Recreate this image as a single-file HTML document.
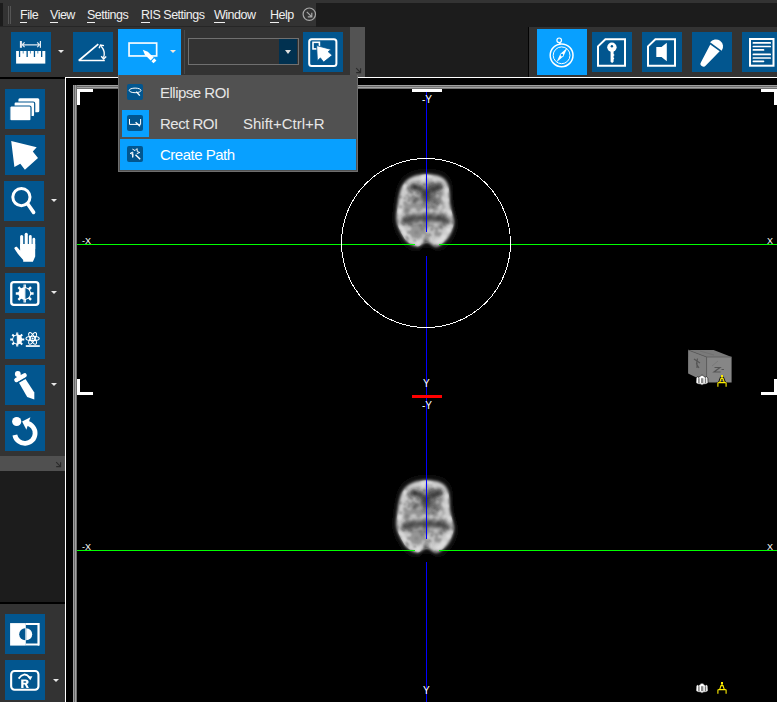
<!DOCTYPE html>
<html><head><meta charset="utf-8">
<style>
html,body{margin:0;padding:0;width:777px;height:702px;overflow:hidden;background:#1c1c1c;font-family:"Liberation Sans",sans-serif;}
.a{position:absolute;}
.btn{position:absolute;width:40px;height:40px;background:#02568f;}
.btn svg{position:absolute;left:0;top:0;width:40px;height:40px;}
.dd{position:absolute;width:0;height:0;border-left:3px solid transparent;border-right:3px solid transparent;border-top:3px solid #e8e8e8;}
.mi{position:absolute;top:8px;font-size:12.5px;letter-spacing:-0.5px;color:#f0f0f0;white-space:nowrap;line-height:14px;}
.mi u{text-decoration:none;border-bottom:1px solid #f0f0f0;}
.pm{position:absolute;font-size:15px;letter-spacing:-0.5px;color:#e6e6e6;white-space:nowrap;line-height:16px;}
.lbl{position:absolute;font-size:10px;color:#fff;line-height:10px;white-space:nowrap;}
</style></head><body>

<!-- title strip -->
<div class="a" style="left:0;top:0;width:777px;height:3px;background:#333;"></div>
<!-- menu bar -->
<div class="a" style="left:0;top:3px;width:316px;height:23px;background:#333;"></div>
<div class="a" style="left:0;top:3px;width:3px;height:23px;background:#1c1c1c;"></div>
<div class="a" style="left:0;top:26px;width:316px;height:1px;background:#262626;"></div>
<div class="a" style="left:8px;top:6px;width:1px;height:18px;background:#555;"></div>
<div class="a" style="left:10px;top:6px;width:1px;height:18px;background:#555;"></div>
<div class="mi" style="left:20px;"><u>F</u>ile</div>
<div class="mi" style="left:50px;"><u>V</u>iew</div>
<div class="mi" style="left:87px;"><u>S</u>ettings</div>
<div class="mi" style="left:141px;"><u>R</u>IS Settings</div>
<div class="mi" style="left:214px;"><u>W</u>indow</div>
<div class="mi" style="left:270px;"><u>H</u>elp</div>
<svg class="a" style="left:302px;top:7px;" width="15" height="15" viewBox="0 0 15 15"><circle cx="7.3" cy="7.2" r="6.2" fill="none" stroke="#a8a8a8" stroke-width="1.2"/><path d="M4.8 4.8 L9.8 9.8 M9.8 5.8 V9.8 H5.8" fill="none" stroke="#a8a8a8" stroke-width="1.2"/></svg>

<!-- toolbar left -->
<div class="a" style="left:0;top:27px;width:350px;height:50px;background:#333;"></div>
<div class="a" style="left:350px;top:27px;width:15px;height:50px;background:#535353;"></div>
<svg class="a" style="left:355px;top:67px;" width="8" height="8" viewBox="0 0 8 8"><path d="M1.2 1.2 L5.6 5.6 M5.6 1.2 V5.6 H1.2" fill="none" stroke="#2a2a2a" stroke-width="1.1"/></svg>

<!-- ruler -->
<div class="btn" style="left:11px;top:32px;"><svg width="40" height="40" viewBox="0 0 40 40">
<rect x="5.1" y="19" width="29.2" height="12.6" fill="#fff"/>
<g fill="#02568f"><rect x="7.9" y="19" width="1.3" height="6"/><rect x="15.5" y="19" width="1.3" height="6"/><rect x="22.8" y="19" width="1.3" height="6"/><rect x="30" y="19" width="1.3" height="6"/></g>
<g fill="#4f8fba"><rect x="11.7" y="19" width="1" height="2.5"/><rect x="18.9" y="19" width="1" height="2.5"/><rect x="26.3" y="19" width="1" height="2.5"/></g>
<rect x="8.9" y="9" width="2" height="6.8" fill="#e8eef4"/><rect x="28.8" y="9" width="1.2" height="6.8" fill="#e8eef4"/>
<path d="M11.2 12.8 H28.6 M13.6 10.4 L11.2 12.8 L13.6 15.2 M26.2 10.4 L28.6 12.8 L26.2 15.2" fill="none" stroke="#dfe8f0" stroke-width="1.2"/>
</svg></div>
<div class="dd" style="left:58px;top:50px;"></div>
<!-- angle -->
<div class="btn" style="left:73px;top:32px;"><svg width="40" height="40" viewBox="0 0 40 40">
<path d="M31.8 28.5 H5.8 L25.3 12.2" fill="none" stroke="#fff" stroke-width="1.7" stroke-linejoin="bevel"/>
<path d="M28.2 14.3 Q32.8 19.5 30.5 25.8" fill="none" stroke="#fff" stroke-width="1.3"/>
<path d="M26.1 16.2 L27.5 13 L31 13.6 M28.2 24.2 L30.6 27 L33.2 24.4" fill="none" stroke="#fff" stroke-width="1.4"/>
</svg></div>
<!-- ROI active -->
<div class="a" style="left:118px;top:29px;width:63px;height:46px;background:#08a0ff;"><svg width="63" height="46" viewBox="0 0 63 46">
<rect x="11.05" y="14.05" width="27.6" height="12.9" fill="none" stroke="#f4fbff" stroke-width="1.7"/>
<g transform="translate(24.8,20.7) rotate(45)">
<path d="M0 0 L5 -2.1 L13.2 -2.1 L13.2 2.1 L5 2.1 Z" fill="#fff"/>
<rect x="14.2" y="-2" width="3" height="4" fill="#fff"/>
</g>
</svg></div>
<div class="dd" style="left:170px;top:50px;border-top-color:#f4e8dc;"></div>
<div class="a" style="left:184px;top:30px;width:1px;height:44px;background:#484848;"></div>
<!-- combo -->
<div class="a" style="left:188px;top:38px;width:109px;height:25px;border:1px solid #707070;background:#333;"></div>
<div class="a" style="left:279px;top:39px;width:18px;height:25px;background:#013150;"></div>
<div class="dd" style="left:285px;top:50px;border-left-width:3.5px;border-right-width:3.5px;border-top-width:4px;border-top-color:#e0e0e0;"></div>
<!-- select -->
<div class="btn" style="left:303px;top:32px;"><svg width="40" height="40" viewBox="0 0 40 40">
<rect x="6.2" y="7.2" width="27.2" height="26.8" rx="2.5" fill="none" stroke="#fff" stroke-width="2"/>
<rect x="10" y="10.3" width="6.4" height="6.6" fill="none" stroke="#fff" stroke-width="1.6"/>
<path d="M13.6 13.6 L28.2 17.4 L25.2 19.7 L29.2 23.3 L20.6 30.1 L17.4 25.9 L14.4 28.8 Z" fill="#fff" stroke="#02568f" stroke-width="0.8"/>
</svg></div>

<!-- right toolbar -->
<div class="a" style="left:528px;top:27px;width:1px;height:50px;background:#030303;"></div>
<div class="a" style="left:529px;top:27px;width:248px;height:50px;background:#333;"></div>
<div class="a" style="left:537px;top:29px;width:50px;height:46px;background:#08a0ff;"><svg width="50" height="46" viewBox="0 0 50 46">
<circle cx="24.6" cy="26.3" r="11.4" fill="none" stroke="#fff" stroke-width="1.5"/>
<circle cx="24.6" cy="26.3" r="8.4" fill="none" stroke="#fff" stroke-width="1"/>
<circle cx="22.2" cy="11.3" r="2.3" fill="none" stroke="#fff" stroke-width="1.2"/>
<path d="M22.6 13.6 L23.2 15" stroke="#fff" stroke-width="1.6"/>
<path d="M19.5 33.2 L23.4 24.8 L30.4 18.8 L26.5 27.2 Z" fill="#fff"/>
<circle cx="24.9" cy="26.1" r="1.3" fill="#08a0ff"/>
</svg></div>
<div class="btn" style="left:592px;top:32px;"><svg width="40" height="40" viewBox="0 0 40 40">
<path d="M6 14.4 L13.4 7.2 H33 V33.7 H6 Z" fill="none" stroke="#fff" stroke-width="2"/>
<circle cx="19.9" cy="15.2" r="4.7" fill="#fff"/>
<circle cx="19.9" cy="14.2" r="1.2" fill="#02568f"/>
<path d="M18.6 18 H21.6 V22 L22.6 23 L21.6 24 V25.5 L22.3 26.5 L21.6 27.5 V29.8 L20.1 31 L18.6 29.8 Z" fill="#fff"/>
</svg></div>
<div class="btn" style="left:642px;top:32px;"><svg width="40" height="40" viewBox="0 0 40 40">
<path d="M6 14.4 L13.4 7.2 H33 V33.7 H6 Z" fill="none" stroke="#fff" stroke-width="2"/>
<path d="M14.3 15 H19.5 L24.8 10.8 V29.2 L19.5 24.9 H14.3 Z" fill="#fff"/>
</svg></div>
<div class="btn" style="left:692px;top:32px;"><svg width="40" height="40" viewBox="0 0 40 40">
<g transform="translate(25.6 12.2) rotate(36) scale(1.12)"><path d="M-6.4 2.6 A6.4 6.4 0 1 1 6.4 2.6 Z" fill="#fff"/><path d="M-5.2 4 H5.2 L2.6 21.5 A2.6 2.6 0 0 1 -2.6 21.5 Z" fill="#fff"/></g>
</svg></div>
<div class="btn" style="left:742px;top:32px;"><svg width="40" height="40" viewBox="0 0 40 40">
<rect x="8" y="7" width="23.5" height="26.7" fill="none" stroke="#fff" stroke-width="2"/>
<g stroke="#fff" stroke-width="1.7" stroke-linecap="round"><path d="M11.4 10.9 H28.2 M11.4 14.5 H28.2 M11.4 17.9 H21.5 M11.4 22.4 H28.2 M11.4 26 H28.2 M11.4 29.3 H21.5"/></g>
</svg></div>

<!-- left sidebar -->
<div class="a" style="left:0;top:77px;width:65px;height:2px;background:#000;"></div>
<div class="a" style="left:0;top:79px;width:65px;height:377px;background:#333;"></div>
<div class="a" style="left:0;top:456px;width:65px;height:15px;background:#505050;"></div>
<svg class="a" style="left:55px;top:461px;" width="8" height="8" viewBox="0 0 8 8"><path d="M1.2 1.2 L5.6 5.6 M5.6 1.2 V5.6 H1.2" fill="none" stroke="#2a2a2a" stroke-width="1.1"/></svg>
<div class="a" style="left:0;top:602px;width:65px;height:2px;background:#000;"></div>
<div class="a" style="left:0;top:604px;width:65px;height:98px;background:#333;"></div>

<div class="btn" style="left:5px;top:89px;"><svg width="40" height="40" viewBox="0 0 40 40">
<rect x="13.4" y="9.2" width="20.9" height="14.1" rx="1.5" fill="#fff"/>
<rect x="9" y="13" width="20.7" height="14.5" rx="1.5" fill="#fff" stroke="#02568f" stroke-width="1.2"/>
<rect x="4.8" y="17" width="21.2" height="14.8" rx="1.5" fill="#fff" stroke="#02568f" stroke-width="1.2"/>
</svg></div>
<div class="btn" style="left:5px;top:135px;"><svg width="40" height="40" viewBox="0 0 40 40">
<path d="M6.2 5.9 L31.7 12.2 L27.8 16.4 L33 22.9 L19.9 34.7 L15.3 28.8 L9.4 32.1 Z" fill="#fff"/>
</svg></div>
<div class="btn" style="left:4px;top:181px;"><svg width="40" height="40" viewBox="0 0 40 40">
<circle cx="17.4" cy="16.1" r="8.6" fill="none" stroke="#fff" stroke-width="3"/>
<path d="M23.6 22.8 L29.6 31.4" stroke="#fff" stroke-width="3.6" stroke-linecap="round"/>
</svg></div>
<div class="dd" style="left:51px;top:199px;"></div>
<div class="btn" style="left:5px;top:227px;"><svg width="40" height="40" viewBox="0 0 40 40">
<rect x="15.1" y="8" width="3.1" height="14" rx="1.5" fill="#fff"/>
<rect x="19.7" y="5.7" width="3.1" height="14" rx="1.5" fill="#fff"/>
<rect x="23.9" y="8" width="2.8" height="14" rx="1.4" fill="#fff"/>
<rect x="27.5" y="10.8" width="2.7" height="12" rx="1.35" fill="#fff"/>
<path d="M15.1 17 H30.2 V29.6 L27.9 34.8 H18.2 V33 L12.8 26.8 L9.3 21.5 Q9.6 19.3 11.8 19.8 L15.1 23.5 Z" fill="#fff"/>
</svg></div>
<div class="btn" style="left:5px;top:273px;"><svg width="40" height="40" viewBox="0 0 40 40">
<defs><clipPath id="gl1"><rect x="0" y="0" width="19.7" height="40"/></clipPath><clipPath id="gr1"><rect x="19.7" y="0" width="20" height="40"/></clipPath></defs>
<rect x="6.25" y="9.15" width="27.1" height="22.7" rx="2.6" fill="none" stroke="#fff" stroke-width="2.3"/>
<path d="M25.99 19.32 L28.62 19.31 L28.62 21.69 L25.99 21.68 L24.98 24.11 L26.85 25.97 L25.17 27.65 L23.31 25.78 L20.88 26.79 L20.89 29.42 L18.51 29.42 L18.52 26.79 L16.09 25.78 L14.23 27.65 L12.55 25.97 L14.42 24.11 L13.41 21.68 L10.78 21.69 L10.78 19.31 L13.41 19.32 L14.42 16.89 L12.55 15.03 L14.23 13.35 L16.09 15.22 L18.52 14.21 L18.51 11.58 L20.89 11.58 L20.88 14.21 L23.31 15.22 L25.17 13.35 L26.85 15.03 L24.98 16.89 Z" fill="#fff" clip-path="url(#gl1)"/>
<path d="M25.99 19.32 L28.62 19.31 L28.62 21.69 L25.99 21.68 L24.98 24.11 L26.85 25.97 L25.17 27.65 L23.31 25.78 L20.88 26.79 L20.89 29.42 L18.51 29.42 L18.52 26.79 L16.09 25.78 L14.23 27.65 L12.55 25.97 L14.42 24.11 L13.41 21.68 L10.78 21.69 L10.78 19.31 L13.41 19.32 L14.42 16.89 L12.55 15.03 L14.23 13.35 L16.09 15.22 L18.52 14.21 L18.51 11.58 L20.89 11.58 L20.88 14.21 L23.31 15.22 L25.17 13.35 L26.85 15.03 L24.98 16.89 Z" fill="#fff" clip-path="url(#gr1)"/>
<circle cx="19.7" cy="20.5" r="5.4" fill="#02568f" clip-path="url(#gr1)"/>
<rect x="19.2" y="14" width="1.2" height="13" fill="#fff"/>
</svg></div>
<div class="dd" style="left:51px;top:291px;"></div>
<div class="btn" style="left:5px;top:319px;"><svg width="40" height="40" viewBox="0 0 40 40">
<defs><clipPath id="gl2"><rect x="0" y="0" width="12.25" height="40"/></clipPath><clipPath id="gr2"><rect x="12.25" y="0" width="20" height="40"/></clipPath></defs>
<path d="M17.15 19.52 L19.28 19.51 L19.28 21.49 L17.15 21.48 L16.41 23.27 L17.92 24.77 L16.52 26.17 L15.02 24.66 L13.23 25.40 L13.24 27.53 L11.26 27.53 L11.27 25.40 L9.48 24.66 L7.98 26.17 L6.58 24.77 L8.09 23.27 L7.35 21.48 L5.22 21.49 L5.22 19.51 L7.35 19.52 L8.09 17.73 L6.58 16.23 L7.98 14.83 L9.48 16.34 L11.27 15.60 L11.26 13.47 L13.24 13.47 L13.23 15.60 L15.02 16.34 L16.52 14.83 L17.92 16.23 L16.41 17.73 Z" fill="#fff" clip-path="url(#gr2)"/>
<path d="M17.15 19.52 L19.28 19.51 L19.28 21.49 L17.15 21.48 L16.41 23.27 L17.92 24.77 L16.52 26.17 L15.02 24.66 L13.23 25.40 L13.24 27.53 L11.26 27.53 L11.27 25.40 L9.48 24.66 L7.98 26.17 L6.58 24.77 L8.09 23.27 L7.35 21.48 L5.22 21.49 L5.22 19.51 L7.35 19.52 L8.09 17.73 L6.58 16.23 L7.98 14.83 L9.48 16.34 L11.27 15.60 L11.26 13.47 L13.24 13.47 L13.23 15.60 L15.02 16.34 L16.52 14.83 L17.92 16.23 L16.41 17.73 Z" fill="#fff" clip-path="url(#gl2)"/>
<circle cx="12.25" cy="20.5" r="4.1" fill="#02568f" clip-path="url(#gl2)"/>
<rect x="11.8" y="15" width="1" height="11" fill="#fff"/>
<g fill="none" stroke="#fff" stroke-width="1.1"><ellipse cx="27.6" cy="19.4" rx="6.6" ry="2.2"/><ellipse cx="27.6" cy="19.4" rx="6.6" ry="2.2" transform="rotate(60 27.6 19.4)"/><ellipse cx="27.6" cy="19.4" rx="6.6" ry="2.2" transform="rotate(120 27.6 19.4)"/></g>
<circle cx="27.6" cy="19.4" r="1" fill="#fff"/>
<rect x="20.8" y="26.2" width="14" height="1.7" fill="#fff"/>
</svg></div>
<div class="btn" style="left:5px;top:365px;"><svg width="40" height="40" viewBox="0 0 40 40">
<circle cx="12.8" cy="9" r="2.9" fill="#fff"/>
<path d="M12.8 9 L15 12.5" stroke="#fff" stroke-width="3.6"/>
<path d="M11.4 15 L19.6 10.4" stroke="#fff" stroke-width="4.4" stroke-linecap="round"/>
<path d="M14 17.7 L20.5 14 L29.3 27.4 L29.3 34.5 L22.2 31.9 Z" fill="#fff"/>
<path d="M12.5 17.6 L21.6 12.6" stroke="#02568f" stroke-width="0.8"/>
</svg></div>
<div class="dd" style="left:51px;top:383px;"></div>
<div class="btn" style="left:5px;top:411px;"><svg width="40" height="40" viewBox="0 0 40 40">
<circle cx="11.7" cy="10.5" r="4.6" fill="#fff"/>
<path d="M9.85 23.97 A10.2 10.2 0 1 0 21.67 12.15" fill="none" stroke="#fff" stroke-width="4.8"/>
<path d="M17.1 10.5 L25.4 6.3 L21.4 18.8 Z" fill="#fff"/>
</svg></div>
<div class="btn" style="left:5px;top:614px;"><svg width="40" height="40" viewBox="0 0 40 40">
<rect x="5.1" y="9.1" width="15.7" height="22.5" fill="#fff"/>
<path d="M20.8 10.1 H33.6 V30.6 H20.8" fill="none" stroke="#fff" stroke-width="2" />
<rect x="32.7" y="9.1" width="1.5" height="22.5" fill="#fff"/>
<path d="M20.2 14.2 A6 6 0 0 0 20.2 26.2 Z" fill="#02568f"/>
<path d="M21.2 14.2 A6 6 0 0 1 21.2 26.2 Z" fill="#fff"/>
</svg></div>
<div class="btn" style="left:5px;top:660px;"><svg width="40" height="40" viewBox="0 0 40 40">
<rect x="6.15" y="11.05" width="27.3" height="18.7" rx="3.4" fill="none" stroke="#fff" stroke-width="2.1"/>
<path d="M16.2 27.9 V19.4 H20.6 Q23.6 19.4 23.6 21.9 Q23.6 23.6 21.9 24.1 L23.9 27.9 H21.5 L19.8 24.4 H18.5 V27.9 Z M18.5 21.2 V22.7 H20.3 Q21.3 22.7 21.3 21.95 Q21.3 21.2 20.3 21.2 Z" fill="#fff" fill-rule="evenodd"/>
<path d="M13.6 18.6 Q19 11.2 24.4 17.2" fill="none" stroke="#fff" stroke-width="1.8"/>
<path d="M22.3 16.6 L27.4 16.2 L25.3 20.2 Z" fill="#fff"/>
</svg></div>
<div class="dd" style="left:53px;top:679px;"></div>

<!-- viewport area -->
<div class="a" style="left:65px;top:77px;width:712px;height:625px;background:#000;"></div>
<div class="a" style="left:65px;top:77px;width:712px;height:1px;background:#fff;"></div>
<div class="a" style="left:65px;top:77px;width:1px;height:625px;background:#fff;"></div>
<!-- gray frame -->
<div class="a" style="left:73px;top:85px;width:704px;height:4px;background:linear-gradient(#9e9e9e 0,#9e9e9e 1px,#6a6a6a 1px,#6a6a6a 2px,#a2a2a2 2px,#a2a2a2 3px,#707070 3px);"></div>
<div class="a" style="left:73px;top:85px;width:4px;height:617px;background:linear-gradient(90deg,#9e9e9e 0,#9e9e9e 1px,#6a6a6a 1px,#6a6a6a 2px,#a2a2a2 2px,#a2a2a2 3px,#707070 3px);"></div>

<div class="a" style="left:77px;top:89px;width:16px;height:3px;background:#fff;"></div>
<div class="a" style="left:77px;top:89px;width:3px;height:16px;background:#fff;"></div>
<div class="a" style="left:761px;top:89px;width:16px;height:3px;background:#fff;"></div>
<div class="a" style="left:774px;top:89px;width:3px;height:16px;background:#fff;"></div>
<div class="a" style="left:77px;top:379px;width:3px;height:16px;background:#fff;"></div>
<div class="a" style="left:77px;top:392px;width:16px;height:3px;background:#fff;"></div>
<div class="a" style="left:774px;top:379px;width:3px;height:16px;background:#fff;"></div>
<div class="a" style="left:761px;top:392px;width:16px;height:3px;background:#fff;"></div>
<div class="a" style="left:386px;top:165px;width:80px;height:95px;"><svg width="80" height="95" viewBox="0 0 80 95">
<defs>
<filter id="hA" x="-50%" y="-50%" width="200%" height="200%"><feGaussianBlur stdDeviation="4"/></filter>
<filter id="bA" x="-20%" y="-20%" width="140%" height="140%"><feGaussianBlur stdDeviation="1.7"/></filter>
<filter id="dA" x="-50%" y="-50%" width="200%" height="200%"><feGaussianBlur stdDeviation="2.6"/></filter>
<filter id="sA" x="-50%" y="-50%" width="200%" height="200%"><feGaussianBlur stdDeviation="1"/></filter>
<filter id="fA" x="-20%" y="-20%" width="140%" height="140%"><feGaussianBlur stdDeviation="0.7"/></filter>
<clipPath id="cA"><path d="M40.7 9.3 C45.5 9.3 51.5 10.1 55.1 12.0 C58.7 13.9 60.8 16.5 62.3 21.0 C63.8 25.5 63.1 33.0 64.0 39.0 C64.9 45.0 67.7 51.9 67.7 57.0 C67.7 62.1 65.8 66.2 64.0 69.7 C62.2 73.2 59.4 76.0 57.0 78.0 C54.6 80.0 52.4 81.6 49.7 81.4 C47.0 81.2 43.7 76.9 40.7 76.9 C37.7 76.9 34.6 81.2 31.7 81.4 C28.8 81.6 25.4 79.7 23.0 78.0 C20.6 76.3 19.2 75.0 17.2 71.5 C15.2 68.0 11.8 62.4 10.9 57.0 C10.0 51.6 10.9 45.0 11.8 39.0 C12.7 33.0 13.9 25.5 16.3 21.0 C18.7 16.5 22.2 13.9 26.3 12.0 C30.4 10.1 35.9 9.3 40.7 9.3 Z"/></clipPath>
</defs>
<path d="M40.7 9.3 C45.5 9.3 51.5 10.1 55.1 12.0 C58.7 13.9 60.8 16.5 62.3 21.0 C63.8 25.5 63.1 33.0 64.0 39.0 C64.9 45.0 67.7 51.9 67.7 57.0 C67.7 62.1 65.8 66.2 64.0 69.7 C62.2 73.2 59.4 76.0 57.0 78.0 C54.6 80.0 52.4 81.6 49.7 81.4 C47.0 81.2 43.7 76.9 40.7 76.9 C37.7 76.9 34.6 81.2 31.7 81.4 C28.8 81.6 25.4 79.7 23.0 78.0 C20.6 76.3 19.2 75.0 17.2 71.5 C15.2 68.0 11.8 62.4 10.9 57.0 C10.0 51.6 10.9 45.0 11.8 39.0 C12.7 33.0 13.9 25.5 16.3 21.0 C18.7 16.5 22.2 13.9 26.3 12.0 C30.4 10.1 35.9 9.3 40.7 9.3 Z" fill="#111" filter="url(#hA)" transform="translate(39 46) scale(1.15) translate(-39 -46)"/>
<g filter="url(#fA)">
<g filter="url(#bA)">
<path d="M40.7 9.3 C45.5 9.3 51.5 10.1 55.1 12.0 C58.7 13.9 60.8 16.5 62.3 21.0 C63.8 25.5 63.1 33.0 64.0 39.0 C64.9 45.0 67.7 51.9 67.7 57.0 C67.7 62.1 65.8 66.2 64.0 69.7 C62.2 73.2 59.4 76.0 57.0 78.0 C54.6 80.0 52.4 81.6 49.7 81.4 C47.0 81.2 43.7 76.9 40.7 76.9 C37.7 76.9 34.6 81.2 31.7 81.4 C28.8 81.6 25.4 79.7 23.0 78.0 C20.6 76.3 19.2 75.0 17.2 71.5 C15.2 68.0 11.8 62.4 10.9 57.0 C10.0 51.6 10.9 45.0 11.8 39.0 C12.7 33.0 13.9 25.5 16.3 21.0 C18.7 16.5 22.2 13.9 26.3 12.0 C30.4 10.1 35.9 9.3 40.7 9.3 Z" fill="#959595"/>
<g clip-path="url(#cA)"><path d="M40.7 9.3 C45.5 9.3 51.5 10.1 55.1 12.0 C58.7 13.9 60.8 16.5 62.3 21.0 C63.8 25.5 63.1 33.0 64.0 39.0 C64.9 45.0 67.7 51.9 67.7 57.0 C67.7 62.1 65.8 66.2 64.0 69.7 C62.2 73.2 59.4 76.0 57.0 78.0 C54.6 80.0 52.4 81.6 49.7 81.4 C47.0 81.2 43.7 76.9 40.7 76.9 C37.7 76.9 34.6 81.2 31.7 81.4 C28.8 81.6 25.4 79.7 23.0 78.0 C20.6 76.3 19.2 75.0 17.2 71.5 C15.2 68.0 11.8 62.4 10.9 57.0 C10.0 51.6 10.9 45.0 11.8 39.0 C12.7 33.0 13.9 25.5 16.3 21.0 C18.7 16.5 22.2 13.9 26.3 12.0 C30.4 10.1 35.9 9.3 40.7 9.3 Z" fill="none" stroke="#cecece" stroke-width="12"/></g>
</g>
<g clip-path="url(#cA)">
<g fill="#ececec" filter="url(#sA)" opacity="0.55"><circle cx="18.9" cy="60.1" r="2.5"/><circle cx="37.7" cy="23.6" r="2.7"/><circle cx="57.5" cy="46.5" r="2.3"/><circle cx="31.3" cy="52.1" r="1.7"/><circle cx="56.6" cy="24.9" r="1.9"/><circle cx="53.3" cy="74.4" r="2.5"/><circle cx="38.9" cy="15.9" r="2.9"/><circle cx="31.1" cy="18.9" r="2.7"/><circle cx="36.2" cy="49.5" r="2.1"/><circle cx="38.1" cy="21.4" r="1.7"/><circle cx="61.0" cy="25.1" r="2.7"/><circle cx="62.6" cy="65.1" r="2.7"/><circle cx="43.8" cy="63.2" r="1.8"/><circle cx="37.6" cy="70.7" r="1.9"/><circle cx="33.6" cy="35.1" r="2.2"/><circle cx="14.6" cy="62.3" r="3.0"/><circle cx="38.8" cy="44.8" r="2.4"/><circle cx="53.9" cy="24.1" r="2.5"/><circle cx="42.4" cy="54.9" r="1.9"/><circle cx="19.2" cy="33.8" r="2.9"/><circle cx="29.8" cy="53.0" r="2.0"/><circle cx="57.8" cy="66.8" r="2.1"/><circle cx="50.0" cy="59.0" r="2.9"/><circle cx="44.4" cy="75.0" r="2.3"/><circle cx="31.5" cy="26.0" r="2.8"/><circle cx="57.3" cy="66.6" r="2.3"/><circle cx="24.5" cy="29.3" r="2.2"/><circle cx="29.3" cy="76.2" r="3.0"/><circle cx="53.8" cy="43.9" r="2.0"/><circle cx="21.7" cy="71.5" r="2.7"/><circle cx="61.9" cy="53.3" r="2.2"/><circle cx="43.9" cy="72.4" r="2.0"/><circle cx="41.1" cy="28.3" r="2.7"/><circle cx="44.6" cy="56.6" r="2.8"/><circle cx="44.1" cy="26.8" r="2.2"/><circle cx="35.8" cy="17.8" r="2.8"/><circle cx="48.3" cy="16.7" r="2.4"/><circle cx="28.5" cy="45.0" r="1.9"/><circle cx="19.0" cy="21.2" r="2.1"/><circle cx="51.6" cy="49.4" r="1.7"/><circle cx="51.7" cy="74.3" r="2.7"/><circle cx="36.8" cy="11.9" r="2.7"/><circle cx="19.5" cy="61.8" r="2.0"/><circle cx="50.8" cy="31.1" r="1.7"/><circle cx="32.3" cy="30.8" r="2.9"/><circle cx="26.7" cy="45.7" r="2.4"/><circle cx="45.1" cy="46.1" r="2.6"/><circle cx="51.0" cy="47.5" r="2.4"/><circle cx="54.6" cy="41.5" r="2.5"/><circle cx="35.6" cy="46.8" r="2.1"/><circle cx="33.1" cy="24.4" r="1.7"/><circle cx="35.0" cy="26.0" r="2.6"/><circle cx="58.0" cy="62.7" r="2.2"/><circle cx="23.2" cy="36.7" r="2.3"/><circle cx="14.1" cy="43.9" r="2.3"/><circle cx="52.0" cy="75.6" r="2.7"/><circle cx="46.6" cy="65.4" r="2.5"/><circle cx="60.5" cy="60.8" r="2.6"/><circle cx="23.7" cy="77.6" r="2.1"/><circle cx="45.9" cy="70.5" r="2.9"/><circle cx="27.8" cy="31.0" r="2.1"/><circle cx="17.7" cy="49.6" r="1.7"/><circle cx="53.5" cy="42.6" r="1.8"/><circle cx="66.4" cy="61.2" r="1.9"/><circle cx="29.1" cy="56.4" r="2.6"/><circle cx="28.3" cy="26.6" r="2.8"/><circle cx="18.2" cy="59.4" r="1.9"/><circle cx="44.9" cy="28.4" r="2.1"/><circle cx="35.2" cy="54.5" r="2.0"/><circle cx="19.5" cy="36.6" r="2.0"/><circle cx="65.1" cy="61.3" r="1.6"/><circle cx="39.1" cy="10.0" r="2.5"/><circle cx="51.0" cy="25.5" r="1.6"/><circle cx="41.7" cy="14.3" r="2.0"/><circle cx="36.2" cy="75.9" r="2.1"/><circle cx="17.1" cy="68.0" r="2.8"/><circle cx="40.8" cy="10.8" r="1.9"/><circle cx="33.2" cy="49.5" r="1.9"/><circle cx="57.1" cy="71.9" r="2.9"/><circle cx="43.9" cy="13.2" r="2.9"/><circle cx="53.8" cy="65.5" r="1.9"/><circle cx="45.4" cy="54.8" r="2.3"/><circle cx="57.0" cy="33.0" r="2.0"/><circle cx="30.2" cy="29.9" r="2.5"/><circle cx="13.1" cy="46.4" r="2.5"/><circle cx="20.4" cy="27.8" r="1.7"/><circle cx="49.8" cy="57.3" r="1.8"/><circle cx="41.3" cy="38.4" r="2.6"/><circle cx="52.7" cy="47.4" r="1.7"/><circle cx="58.6" cy="23.5" r="1.7"/><circle cx="30.1" cy="48.0" r="2.5"/><circle cx="19.4" cy="61.6" r="2.3"/><circle cx="18.7" cy="72.5" r="2.7"/><circle cx="63.4" cy="59.3" r="1.9"/><circle cx="55.7" cy="76.5" r="2.3"/><circle cx="32.4" cy="79.5" r="2.9"/><circle cx="30.1" cy="54.2" r="2.5"/><circle cx="54.3" cy="56.8" r="1.8"/><circle cx="64.8" cy="48.3" r="2.8"/><circle cx="42.3" cy="66.7" r="2.6"/><circle cx="62.0" cy="34.9" r="1.7"/><circle cx="33.3" cy="20.7" r="2.4"/><circle cx="57.9" cy="34.9" r="1.8"/><circle cx="48.9" cy="23.2" r="1.7"/><circle cx="64.7" cy="47.3" r="2.9"/><circle cx="39.8" cy="16.5" r="1.9"/><circle cx="34.5" cy="56.3" r="2.7"/><circle cx="54.1" cy="57.1" r="2.0"/><circle cx="34.8" cy="36.1" r="2.3"/><circle cx="24.9" cy="48.4" r="2.2"/><circle cx="44.2" cy="68.8" r="2.6"/><circle cx="31.6" cy="37.3" r="1.6"/><circle cx="48.9" cy="51.8" r="2.4"/><circle cx="22.6" cy="63.5" r="2.7"/><circle cx="38.0" cy="11.2" r="2.1"/><circle cx="58.6" cy="45.5" r="2.2"/><circle cx="32.4" cy="55.4" r="2.4"/><circle cx="50.6" cy="73.6" r="2.7"/><circle cx="31.5" cy="26.3" r="2.7"/></g>
<g fill="#303030" filter="url(#sA)" opacity="0.4"><circle cx="20.9" cy="72.3" r="1.7"/><circle cx="47.0" cy="18.3" r="1.7"/><circle cx="24.9" cy="59.5" r="1.2"/><circle cx="22.1" cy="22.9" r="1.4"/><circle cx="51.8" cy="23.8" r="1.5"/><circle cx="29.1" cy="57.0" r="1.3"/><circle cx="20.6" cy="17.9" r="1.0"/><circle cx="50.8" cy="38.9" r="1.1"/><circle cx="61.8" cy="57.4" r="1.0"/><circle cx="52.5" cy="52.8" r="1.4"/><circle cx="31.4" cy="56.0" r="1.5"/><circle cx="30.9" cy="33.7" r="1.6"/><circle cx="47.1" cy="42.2" r="1.4"/><circle cx="22.4" cy="67.8" r="1.0"/><circle cx="47.6" cy="42.0" r="1.2"/><circle cx="44.2" cy="51.9" r="1.1"/><circle cx="38.4" cy="19.7" r="1.6"/><circle cx="28.6" cy="32.3" r="1.2"/><circle cx="18.1" cy="55.1" r="1.7"/><circle cx="41.1" cy="15.9" r="1.3"/><circle cx="54.7" cy="22.6" r="1.6"/><circle cx="41.3" cy="13.5" r="1.2"/><circle cx="45.0" cy="14.4" r="1.2"/><circle cx="43.6" cy="70.0" r="1.4"/><circle cx="27.2" cy="31.5" r="1.7"/><circle cx="30.5" cy="67.4" r="1.0"/><circle cx="38.9" cy="75.6" r="1.6"/><circle cx="43.8" cy="21.0" r="1.7"/><circle cx="55.6" cy="62.4" r="1.4"/><circle cx="18.8" cy="33.2" r="1.5"/><circle cx="48.4" cy="37.0" r="1.6"/><circle cx="14.4" cy="32.0" r="1.6"/><circle cx="54.2" cy="18.5" r="1.2"/><circle cx="15.7" cy="58.0" r="1.4"/><circle cx="22.9" cy="35.8" r="1.7"/><circle cx="34.5" cy="60.2" r="1.5"/><circle cx="37.4" cy="49.8" r="1.3"/><circle cx="20.9" cy="45.1" r="1.2"/><circle cx="28.8" cy="21.4" r="1.7"/><circle cx="34.5" cy="22.4" r="1.0"/><circle cx="21.9" cy="73.9" r="1.3"/><circle cx="49.0" cy="24.7" r="1.5"/><circle cx="36.0" cy="63.7" r="1.4"/><circle cx="31.5" cy="28.6" r="1.5"/><circle cx="58.9" cy="60.3" r="1.4"/><circle cx="28.7" cy="75.6" r="1.7"/><circle cx="17.7" cy="59.3" r="1.6"/><circle cx="49.5" cy="81.3" r="1.7"/><circle cx="28.7" cy="36.2" r="1.8"/><circle cx="19.0" cy="37.4" r="1.5"/><circle cx="25.4" cy="27.6" r="1.6"/><circle cx="45.8" cy="64.3" r="1.6"/><circle cx="39.0" cy="61.0" r="1.4"/><circle cx="67.2" cy="57.4" r="1.3"/><circle cx="48.8" cy="29.7" r="1.1"/><circle cx="32.2" cy="17.5" r="1.0"/><circle cx="14.6" cy="42.0" r="1.6"/><circle cx="11.9" cy="56.0" r="1.1"/><circle cx="39.6" cy="29.8" r="1.4"/><circle cx="51.7" cy="38.8" r="1.3"/></g>
<g fill="none" stroke="#1e1e1e" stroke-linecap="round" filter="url(#dA)" opacity="0.9">
<path d="M27 22 Q34 22 40.7 29 Q47 22 54 22" stroke-width="6"/>
<path d="M40.7 29 V40" stroke-width="4"/>
<path d="M30 36 L40.7 30 L51.5 36" stroke-width="3" stroke="#3a3a3a"/>
<path d="M19 56 Q30 51 40.7 54 Q51 51 62 56" stroke-width="6" stroke="#333"/>
<path d="M40.7 72 V80" stroke-width="3" stroke="#2a2a2a"/>
</g>
</g>
</g>
</svg></div>
<div class="a" style="left:386px;top:471px;width:80px;height:95px;"><svg width="80" height="95" viewBox="0 0 80 95">
<defs>
<filter id="hB" x="-50%" y="-50%" width="200%" height="200%"><feGaussianBlur stdDeviation="4"/></filter>
<filter id="bB" x="-20%" y="-20%" width="140%" height="140%"><feGaussianBlur stdDeviation="1.7"/></filter>
<filter id="dB" x="-50%" y="-50%" width="200%" height="200%"><feGaussianBlur stdDeviation="2.6"/></filter>
<filter id="sB" x="-50%" y="-50%" width="200%" height="200%"><feGaussianBlur stdDeviation="1"/></filter>
<filter id="fB" x="-20%" y="-20%" width="140%" height="140%"><feGaussianBlur stdDeviation="0.7"/></filter>
<clipPath id="cB"><path d="M40.7 9.3 C45.5 9.3 51.5 10.1 55.1 12.0 C58.7 13.9 60.8 16.5 62.3 21.0 C63.8 25.5 63.1 33.0 64.0 39.0 C64.9 45.0 67.7 51.9 67.7 57.0 C67.7 62.1 65.8 66.2 64.0 69.7 C62.2 73.2 59.4 76.0 57.0 78.0 C54.6 80.0 52.4 81.6 49.7 81.4 C47.0 81.2 43.7 76.9 40.7 76.9 C37.7 76.9 34.6 81.2 31.7 81.4 C28.8 81.6 25.4 79.7 23.0 78.0 C20.6 76.3 19.2 75.0 17.2 71.5 C15.2 68.0 11.8 62.4 10.9 57.0 C10.0 51.6 10.9 45.0 11.8 39.0 C12.7 33.0 13.9 25.5 16.3 21.0 C18.7 16.5 22.2 13.9 26.3 12.0 C30.4 10.1 35.9 9.3 40.7 9.3 Z"/></clipPath>
</defs>
<path d="M40.7 9.3 C45.5 9.3 51.5 10.1 55.1 12.0 C58.7 13.9 60.8 16.5 62.3 21.0 C63.8 25.5 63.1 33.0 64.0 39.0 C64.9 45.0 67.7 51.9 67.7 57.0 C67.7 62.1 65.8 66.2 64.0 69.7 C62.2 73.2 59.4 76.0 57.0 78.0 C54.6 80.0 52.4 81.6 49.7 81.4 C47.0 81.2 43.7 76.9 40.7 76.9 C37.7 76.9 34.6 81.2 31.7 81.4 C28.8 81.6 25.4 79.7 23.0 78.0 C20.6 76.3 19.2 75.0 17.2 71.5 C15.2 68.0 11.8 62.4 10.9 57.0 C10.0 51.6 10.9 45.0 11.8 39.0 C12.7 33.0 13.9 25.5 16.3 21.0 C18.7 16.5 22.2 13.9 26.3 12.0 C30.4 10.1 35.9 9.3 40.7 9.3 Z" fill="#111" filter="url(#hB)" transform="translate(39 46) scale(1.15) translate(-39 -46)"/>
<g filter="url(#fB)">
<g filter="url(#bB)">
<path d="M40.7 9.3 C45.5 9.3 51.5 10.1 55.1 12.0 C58.7 13.9 60.8 16.5 62.3 21.0 C63.8 25.5 63.1 33.0 64.0 39.0 C64.9 45.0 67.7 51.9 67.7 57.0 C67.7 62.1 65.8 66.2 64.0 69.7 C62.2 73.2 59.4 76.0 57.0 78.0 C54.6 80.0 52.4 81.6 49.7 81.4 C47.0 81.2 43.7 76.9 40.7 76.9 C37.7 76.9 34.6 81.2 31.7 81.4 C28.8 81.6 25.4 79.7 23.0 78.0 C20.6 76.3 19.2 75.0 17.2 71.5 C15.2 68.0 11.8 62.4 10.9 57.0 C10.0 51.6 10.9 45.0 11.8 39.0 C12.7 33.0 13.9 25.5 16.3 21.0 C18.7 16.5 22.2 13.9 26.3 12.0 C30.4 10.1 35.9 9.3 40.7 9.3 Z" fill="#959595"/>
<g clip-path="url(#cB)"><path d="M40.7 9.3 C45.5 9.3 51.5 10.1 55.1 12.0 C58.7 13.9 60.8 16.5 62.3 21.0 C63.8 25.5 63.1 33.0 64.0 39.0 C64.9 45.0 67.7 51.9 67.7 57.0 C67.7 62.1 65.8 66.2 64.0 69.7 C62.2 73.2 59.4 76.0 57.0 78.0 C54.6 80.0 52.4 81.6 49.7 81.4 C47.0 81.2 43.7 76.9 40.7 76.9 C37.7 76.9 34.6 81.2 31.7 81.4 C28.8 81.6 25.4 79.7 23.0 78.0 C20.6 76.3 19.2 75.0 17.2 71.5 C15.2 68.0 11.8 62.4 10.9 57.0 C10.0 51.6 10.9 45.0 11.8 39.0 C12.7 33.0 13.9 25.5 16.3 21.0 C18.7 16.5 22.2 13.9 26.3 12.0 C30.4 10.1 35.9 9.3 40.7 9.3 Z" fill="none" stroke="#cecece" stroke-width="12"/></g>
</g>
<g clip-path="url(#cB)">
<g fill="#ececec" filter="url(#sB)" opacity="0.55"><circle cx="18.9" cy="60.1" r="2.5"/><circle cx="37.7" cy="23.6" r="2.7"/><circle cx="57.5" cy="46.5" r="2.3"/><circle cx="31.3" cy="52.1" r="1.7"/><circle cx="56.6" cy="24.9" r="1.9"/><circle cx="53.3" cy="74.4" r="2.5"/><circle cx="38.9" cy="15.9" r="2.9"/><circle cx="31.1" cy="18.9" r="2.7"/><circle cx="36.2" cy="49.5" r="2.1"/><circle cx="38.1" cy="21.4" r="1.7"/><circle cx="61.0" cy="25.1" r="2.7"/><circle cx="62.6" cy="65.1" r="2.7"/><circle cx="43.8" cy="63.2" r="1.8"/><circle cx="37.6" cy="70.7" r="1.9"/><circle cx="33.6" cy="35.1" r="2.2"/><circle cx="14.6" cy="62.3" r="3.0"/><circle cx="38.8" cy="44.8" r="2.4"/><circle cx="53.9" cy="24.1" r="2.5"/><circle cx="42.4" cy="54.9" r="1.9"/><circle cx="19.2" cy="33.8" r="2.9"/><circle cx="29.8" cy="53.0" r="2.0"/><circle cx="57.8" cy="66.8" r="2.1"/><circle cx="50.0" cy="59.0" r="2.9"/><circle cx="44.4" cy="75.0" r="2.3"/><circle cx="31.5" cy="26.0" r="2.8"/><circle cx="57.3" cy="66.6" r="2.3"/><circle cx="24.5" cy="29.3" r="2.2"/><circle cx="29.3" cy="76.2" r="3.0"/><circle cx="53.8" cy="43.9" r="2.0"/><circle cx="21.7" cy="71.5" r="2.7"/><circle cx="61.9" cy="53.3" r="2.2"/><circle cx="43.9" cy="72.4" r="2.0"/><circle cx="41.1" cy="28.3" r="2.7"/><circle cx="44.6" cy="56.6" r="2.8"/><circle cx="44.1" cy="26.8" r="2.2"/><circle cx="35.8" cy="17.8" r="2.8"/><circle cx="48.3" cy="16.7" r="2.4"/><circle cx="28.5" cy="45.0" r="1.9"/><circle cx="19.0" cy="21.2" r="2.1"/><circle cx="51.6" cy="49.4" r="1.7"/><circle cx="51.7" cy="74.3" r="2.7"/><circle cx="36.8" cy="11.9" r="2.7"/><circle cx="19.5" cy="61.8" r="2.0"/><circle cx="50.8" cy="31.1" r="1.7"/><circle cx="32.3" cy="30.8" r="2.9"/><circle cx="26.7" cy="45.7" r="2.4"/><circle cx="45.1" cy="46.1" r="2.6"/><circle cx="51.0" cy="47.5" r="2.4"/><circle cx="54.6" cy="41.5" r="2.5"/><circle cx="35.6" cy="46.8" r="2.1"/><circle cx="33.1" cy="24.4" r="1.7"/><circle cx="35.0" cy="26.0" r="2.6"/><circle cx="58.0" cy="62.7" r="2.2"/><circle cx="23.2" cy="36.7" r="2.3"/><circle cx="14.1" cy="43.9" r="2.3"/><circle cx="52.0" cy="75.6" r="2.7"/><circle cx="46.6" cy="65.4" r="2.5"/><circle cx="60.5" cy="60.8" r="2.6"/><circle cx="23.7" cy="77.6" r="2.1"/><circle cx="45.9" cy="70.5" r="2.9"/><circle cx="27.8" cy="31.0" r="2.1"/><circle cx="17.7" cy="49.6" r="1.7"/><circle cx="53.5" cy="42.6" r="1.8"/><circle cx="66.4" cy="61.2" r="1.9"/><circle cx="29.1" cy="56.4" r="2.6"/><circle cx="28.3" cy="26.6" r="2.8"/><circle cx="18.2" cy="59.4" r="1.9"/><circle cx="44.9" cy="28.4" r="2.1"/><circle cx="35.2" cy="54.5" r="2.0"/><circle cx="19.5" cy="36.6" r="2.0"/><circle cx="65.1" cy="61.3" r="1.6"/><circle cx="39.1" cy="10.0" r="2.5"/><circle cx="51.0" cy="25.5" r="1.6"/><circle cx="41.7" cy="14.3" r="2.0"/><circle cx="36.2" cy="75.9" r="2.1"/><circle cx="17.1" cy="68.0" r="2.8"/><circle cx="40.8" cy="10.8" r="1.9"/><circle cx="33.2" cy="49.5" r="1.9"/><circle cx="57.1" cy="71.9" r="2.9"/><circle cx="43.9" cy="13.2" r="2.9"/><circle cx="53.8" cy="65.5" r="1.9"/><circle cx="45.4" cy="54.8" r="2.3"/><circle cx="57.0" cy="33.0" r="2.0"/><circle cx="30.2" cy="29.9" r="2.5"/><circle cx="13.1" cy="46.4" r="2.5"/><circle cx="20.4" cy="27.8" r="1.7"/><circle cx="49.8" cy="57.3" r="1.8"/><circle cx="41.3" cy="38.4" r="2.6"/><circle cx="52.7" cy="47.4" r="1.7"/><circle cx="58.6" cy="23.5" r="1.7"/><circle cx="30.1" cy="48.0" r="2.5"/><circle cx="19.4" cy="61.6" r="2.3"/><circle cx="18.7" cy="72.5" r="2.7"/><circle cx="63.4" cy="59.3" r="1.9"/><circle cx="55.7" cy="76.5" r="2.3"/><circle cx="32.4" cy="79.5" r="2.9"/><circle cx="30.1" cy="54.2" r="2.5"/><circle cx="54.3" cy="56.8" r="1.8"/><circle cx="64.8" cy="48.3" r="2.8"/><circle cx="42.3" cy="66.7" r="2.6"/><circle cx="62.0" cy="34.9" r="1.7"/><circle cx="33.3" cy="20.7" r="2.4"/><circle cx="57.9" cy="34.9" r="1.8"/><circle cx="48.9" cy="23.2" r="1.7"/><circle cx="64.7" cy="47.3" r="2.9"/><circle cx="39.8" cy="16.5" r="1.9"/><circle cx="34.5" cy="56.3" r="2.7"/><circle cx="54.1" cy="57.1" r="2.0"/><circle cx="34.8" cy="36.1" r="2.3"/><circle cx="24.9" cy="48.4" r="2.2"/><circle cx="44.2" cy="68.8" r="2.6"/><circle cx="31.6" cy="37.3" r="1.6"/><circle cx="48.9" cy="51.8" r="2.4"/><circle cx="22.6" cy="63.5" r="2.7"/><circle cx="38.0" cy="11.2" r="2.1"/><circle cx="58.6" cy="45.5" r="2.2"/><circle cx="32.4" cy="55.4" r="2.4"/><circle cx="50.6" cy="73.6" r="2.7"/><circle cx="31.5" cy="26.3" r="2.7"/></g>
<g fill="#303030" filter="url(#sB)" opacity="0.4"><circle cx="20.9" cy="72.3" r="1.7"/><circle cx="47.0" cy="18.3" r="1.7"/><circle cx="24.9" cy="59.5" r="1.2"/><circle cx="22.1" cy="22.9" r="1.4"/><circle cx="51.8" cy="23.8" r="1.5"/><circle cx="29.1" cy="57.0" r="1.3"/><circle cx="20.6" cy="17.9" r="1.0"/><circle cx="50.8" cy="38.9" r="1.1"/><circle cx="61.8" cy="57.4" r="1.0"/><circle cx="52.5" cy="52.8" r="1.4"/><circle cx="31.4" cy="56.0" r="1.5"/><circle cx="30.9" cy="33.7" r="1.6"/><circle cx="47.1" cy="42.2" r="1.4"/><circle cx="22.4" cy="67.8" r="1.0"/><circle cx="47.6" cy="42.0" r="1.2"/><circle cx="44.2" cy="51.9" r="1.1"/><circle cx="38.4" cy="19.7" r="1.6"/><circle cx="28.6" cy="32.3" r="1.2"/><circle cx="18.1" cy="55.1" r="1.7"/><circle cx="41.1" cy="15.9" r="1.3"/><circle cx="54.7" cy="22.6" r="1.6"/><circle cx="41.3" cy="13.5" r="1.2"/><circle cx="45.0" cy="14.4" r="1.2"/><circle cx="43.6" cy="70.0" r="1.4"/><circle cx="27.2" cy="31.5" r="1.7"/><circle cx="30.5" cy="67.4" r="1.0"/><circle cx="38.9" cy="75.6" r="1.6"/><circle cx="43.8" cy="21.0" r="1.7"/><circle cx="55.6" cy="62.4" r="1.4"/><circle cx="18.8" cy="33.2" r="1.5"/><circle cx="48.4" cy="37.0" r="1.6"/><circle cx="14.4" cy="32.0" r="1.6"/><circle cx="54.2" cy="18.5" r="1.2"/><circle cx="15.7" cy="58.0" r="1.4"/><circle cx="22.9" cy="35.8" r="1.7"/><circle cx="34.5" cy="60.2" r="1.5"/><circle cx="37.4" cy="49.8" r="1.3"/><circle cx="20.9" cy="45.1" r="1.2"/><circle cx="28.8" cy="21.4" r="1.7"/><circle cx="34.5" cy="22.4" r="1.0"/><circle cx="21.9" cy="73.9" r="1.3"/><circle cx="49.0" cy="24.7" r="1.5"/><circle cx="36.0" cy="63.7" r="1.4"/><circle cx="31.5" cy="28.6" r="1.5"/><circle cx="58.9" cy="60.3" r="1.4"/><circle cx="28.7" cy="75.6" r="1.7"/><circle cx="17.7" cy="59.3" r="1.6"/><circle cx="49.5" cy="81.3" r="1.7"/><circle cx="28.7" cy="36.2" r="1.8"/><circle cx="19.0" cy="37.4" r="1.5"/><circle cx="25.4" cy="27.6" r="1.6"/><circle cx="45.8" cy="64.3" r="1.6"/><circle cx="39.0" cy="61.0" r="1.4"/><circle cx="67.2" cy="57.4" r="1.3"/><circle cx="48.8" cy="29.7" r="1.1"/><circle cx="32.2" cy="17.5" r="1.0"/><circle cx="14.6" cy="42.0" r="1.6"/><circle cx="11.9" cy="56.0" r="1.1"/><circle cx="39.6" cy="29.8" r="1.4"/><circle cx="51.7" cy="38.8" r="1.3"/></g>
<g fill="none" stroke="#1e1e1e" stroke-linecap="round" filter="url(#dB)" opacity="0.9">
<path d="M27 22 Q34 22 40.7 29 Q47 22 54 22" stroke-width="6"/>
<path d="M40.7 29 V40" stroke-width="4"/>
<path d="M30 36 L40.7 30 L51.5 36" stroke-width="3" stroke="#3a3a3a"/>
<path d="M19 56 Q30 51 40.7 54 Q51 51 62 56" stroke-width="6" stroke="#333"/>
<path d="M40.7 72 V80" stroke-width="3" stroke="#2a2a2a"/>
</g>
</g>
</g>
</svg></div>
<div class="a" style="left:426px;top:92px;width:1px;height:140px;background:#0000ff;"></div>
<div class="a" style="left:426px;top:256px;width:1px;height:139px;background:#0000ff;"></div>
<div class="a" style="left:77px;top:244px;width:338px;height:1px;background:#00ff00;"></div>
<div class="a" style="left:439px;top:244px;width:338px;height:1px;background:#00ff00;"></div>
<div class="a" style="left:426px;top:398px;width:1px;height:141px;background:#0000ff;"></div>
<div class="a" style="left:426px;top:562px;width:1px;height:140px;background:#0000ff;"></div>
<div class="a" style="left:77px;top:550px;width:338px;height:1px;background:#00ff00;"></div>
<div class="a" style="left:439px;top:550px;width:338px;height:1px;background:#00ff00;"></div>
<div class="a" style="left:412px;top:89px;width:30px;height:3px;background:#fff;"></div>
<div class="a" style="left:412px;top:395px;width:30px;height:3px;background:#ff0000;"></div>
<svg class="a" style="left:330px;top:148px;" width="192" height="192" viewBox="0 0 192 192"><circle cx="96" cy="95" r="84.5" fill="none" stroke="#fff" stroke-width="1" shape-rendering="crispEdges"/></svg>
<div class="lbl" style="left:422px;top:95px;">-Y</div>
<div class="lbl" style="left:423px;top:379px;">Y</div>
<div class="lbl" style="left:82px;top:236px;"><span style="font-size:9px">-X</span></div>
<div class="lbl" style="left:767px;top:236px;"><span style="font-size:9px">X</span></div>
<div class="lbl" style="left:422px;top:401px;">-Y</div>
<div class="lbl" style="left:82px;top:542px;"><span style="font-size:9px">-X</span></div>
<div class="lbl" style="left:767px;top:542px;"><span style="font-size:9px">X</span></div>
<div class="lbl" style="left:423px;top:686px;">Y</div>
<svg class="a" style="left:680px;top:340px;" width="60" height="55" viewBox="680 340 60 55">
<polygon points="688.1,350 713.6,350 731.6,357 706.6,357" fill="#7a7a7a"/>
<polygon points="688.1,350 706.6,357 706.6,382.5 688.1,373.6" fill="#7e7e7e"/>
<polygon points="706.6,357 731.6,357 731.6,382.5 706.6,382.5" fill="#868686"/>
<g fill="none" stroke="#5e5e5e" stroke-width="0.8"><path d="M688.1 350 L706.6 357 L731.6 357 M706.6 357 V382.5"/></g>
<g stroke="#4a4a4a" stroke-width="1.2" fill="none" opacity="0.8"><path d="M714.5 367.5 H720 L714 372 H720.5 M721.5 369.5 H724"/><path d="M694 359 L700 363 M697.5 358.5 L696.5 364 L699 368 M697 363 V368"/></g>
<g opacity="0.35" stroke="#555" stroke-width="0.8" fill="none"><path d="M700 351 L714 355 M718 361 L712 366"/></g>
</svg><svg class="a" style="left:695px;top:374px;" width="15" height="12" viewBox="0 0 15 12">
<path d="M1.2 4 L2.5 2.7 L4 3.5 L5.5 1.8 L7 1 L8.5 1.8 L10 3.5 L11.5 2.7 L12.8 4 L13 8.5 L11.5 10 L8.5 10.2 L7 11.2 L5.5 10.2 L2.5 10 L1 8.5 Z" fill="#fff" stroke="#000" stroke-width="0.6"/>
<rect x="3.2" y="4.2" width="1.4" height="5" fill="#7a7a7a"/><rect x="6" y="4.2" width="2.4" height="5" fill="#8a8a8a"/><rect x="9.8" y="4.2" width="1.4" height="5" fill="#7a7a7a"/>
</svg><svg class="a" style="left:716px;top:374px;" width="12" height="14" viewBox="0 0 12 14">
<g stroke="#000" stroke-width="2.4" fill="none" opacity="0.9"><path d="M6 1.5 V4 M3.5 8 L4.8 4.5 H7.2 L8.5 8 M2.2 8.5 H9.8 M1.8 8.5 V12.5 M10.2 8.5 V12.5"/></g>
<rect x="5" y="1" width="2" height="2.6" fill="#ffee00"/>
<g stroke="#ffee00" stroke-width="1.1" fill="none"><path d="M3.8 8.2 L5 4.6 H7 L8.2 8.2 M2.3 8.6 H9.7 M1.9 8.6 V12.8 M10.1 8.6 V12.8"/></g>
</svg><svg class="a" style="left:695px;top:682px;" width="15" height="12" viewBox="0 0 15 12">
<path d="M1.2 4 L2.5 2.7 L4 3.5 L5.5 1.8 L7 1 L8.5 1.8 L10 3.5 L11.5 2.7 L12.8 4 L13 8.5 L11.5 10 L8.5 10.2 L7 11.2 L5.5 10.2 L2.5 10 L1 8.5 Z" fill="#fff" stroke="#000" stroke-width="0.6"/>
<rect x="3.2" y="4.2" width="1.4" height="5" fill="#7a7a7a"/><rect x="6" y="4.2" width="2.4" height="5" fill="#8a8a8a"/><rect x="9.8" y="4.2" width="1.4" height="5" fill="#7a7a7a"/>
</svg><svg class="a" style="left:716px;top:681px;" width="12" height="14" viewBox="0 0 12 14">
<g stroke="#000" stroke-width="2.4" fill="none" opacity="0.9"><path d="M6 1.5 V4 M3.5 8 L4.8 4.5 H7.2 L8.5 8 M2.2 8.5 H9.8 M1.8 8.5 V12.5 M10.2 8.5 V12.5"/></g>
<rect x="5" y="1" width="2" height="2.6" fill="#ffee00"/>
<g stroke="#ffee00" stroke-width="1.1" fill="none"><path d="M3.8 8.2 L5 4.6 H7 L8.2 8.2 M2.3 8.6 H9.7 M1.9 8.6 V12.8 M10.1 8.6 V12.8"/></g>
</svg><!-- popup menu -->
<div class="a" style="left:118px;top:75px;width:240px;height:97px;background:#6e6e6e;"></div>
<div class="a" style="left:119px;top:75px;width:238px;height:96px;background:#515151;"></div>
<div class="a" style="left:122px;top:110px;width:27px;height:27px;background:#08a0ff;"></div>
<div class="a" style="left:120px;top:139px;width:236px;height:31px;background:#08a0ff;"></div>
<div class="a" style="left:127px;top:84px;width:16px;height:16px;background:#02568f;border-radius:2px;"><svg width="16" height="16" viewBox="0 0 16 16" style="position:absolute;left:0;top:0"><ellipse cx="8.1" cy="6.4" rx="5.9" ry="2.3" fill="none" stroke="#fff" stroke-width="1"/><path d="M9.3 7.6 L12.8 11.6" stroke="#fff" stroke-width="1.4"/></svg></div>
<div class="a" style="left:127px;top:115px;width:16px;height:16px;background:#02568f;border-radius:2px;"><svg width="16" height="16" viewBox="0 0 16 16" style="position:absolute;left:0;top:0"><path d="M2.5 4 V9.4 H13.6 V4" fill="none" stroke="#fff" stroke-width="1"/><path d="M8.6 7.2 L13 11.2" stroke="#fff" stroke-width="1.4"/></svg></div>
<div class="a" style="left:127px;top:146px;width:16px;height:16px;background:#02568f;border-radius:2px;"><svg width="16" height="16" viewBox="0 0 16 16" style="position:absolute;left:0;top:0"><path d="M5.4 3.1 L8 4.6 L10 2.6 L10.3 5.6 L12.8 6.5 L9.8 7.6 M5.7 11.4 L6 8.3 L3.1 7.4 L5.8 6 Z" fill="none" stroke="#fff" stroke-width="1"/><path d="M8.5 8.8 L13.2 13.2" stroke="#fff" stroke-width="1.5"/></svg></div>
<div class="pm" style="left:160px;top:85px;">Ellipse ROI</div>
<div class="pm" style="left:160px;top:116px;">Rect ROI</div>
<div class="pm" style="left:243px;top:116px;letter-spacing:0;">Shift+Ctrl+R</div>
<div class="pm" style="left:160px;top:147px;color:#fff;">Create Path</div>

</body></html>
